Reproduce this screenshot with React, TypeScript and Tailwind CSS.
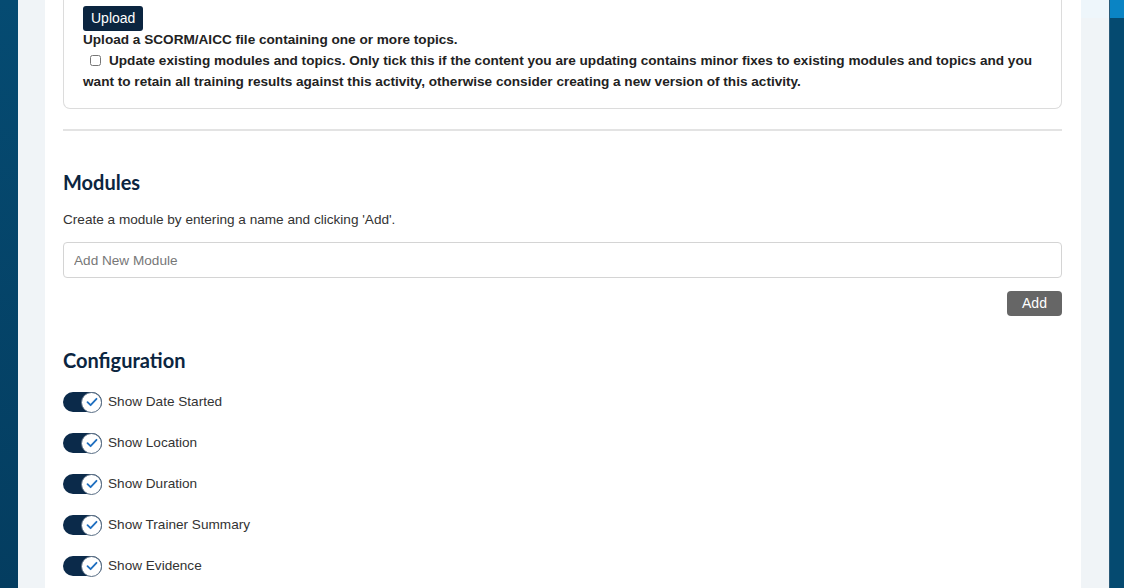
import React from "react";

const Toggle = ({ label }: { label: string }) => (
  <div className="flex items-center h-[20px]">
    <div className="relative w-[39px] h-[20px] rounded-full bg-[#0b2a4a]">
      <div className="absolute right-0 top-0 w-[21px] h-[21px] -mt-[0.5px] rounded-full bg-white border border-[#5a6f86] flex items-center justify-center">
        <svg width="12" height="10" viewBox="0 0 12 10" fill="none">
          <path d="M1.5 5.2 L4.6 8.2 L10.5 1.8" stroke="#1f6fc0" strokeWidth="1.8" strokeLinecap="round" strokeLinejoin="round" />
        </svg>
      </div>
    </div>
    <span className="ml-[6px] text-[13.6px] text-[#333]">{label}</span>
  </div>
);

export default function App() {
  return (
    <div
      className="w-[1124px] h-[588px] overflow-hidden flex"
      style={{ fontFamily: '"Liberation Sans", Arial, sans-serif' }}
    >
      <div className="w-[18px] shrink-0 h-full bg-gradient-to-b from-[#054b72] to-[#043d60]" />
      <div className="w-[27px] shrink-0 h-full bg-[#f0f4f7]" />
      <div className="w-[1036px] shrink-0 h-full bg-white pl-[18px] pr-[19px]">
        <div className="border border-t-0 border-[#dcdcdc] rounded-b-[7px] pl-[19px] pr-[20px] pt-[6px] pb-[16px]">
          <button className="h-[25px] px-[8px] bg-[#0b2540] text-white text-[14px] rounded-[3px]">
            Upload
          </button>
          <div className="text-[13.6px] font-bold text-[#222] leading-[21px] -mt-[2px]">
            Upload a SCORM/AICC file containing one or more topics.
          </div>
          <div className="text-[13.6px] font-bold text-[#222] leading-[21px]">
            <input type="checkbox" className="ml-[7px] mr-[8px] w-[11px] h-[11px] align-[-1px]" />
            Update existing modules and topics. Only tick this if the content you are updating contains minor fixes to existing modules and topics and you want to retain all training results against this activity, otherwise consider creating a new version of this activity.
          </div>
        </div>
        <div className="mt-[20px] h-[2px] bg-[#e3e3e3]" />
        <h2
          className="mt-[39px] text-[20px] leading-[24px] font-bold text-[#0b2540]"
          style={{ fontFamily: 'Lato, "Open Sans", sans-serif' }}
        >
          Modules
        </h2>
        <p className="mt-[16px] text-[13.6px] leading-[20px] text-[#333]">
          Create a module by entering a name and clicking 'Add'.
        </p>
        <input
          className="mt-[12px] w-full h-[36px] border border-[#d4d4d4] rounded-[4px] px-[10px] text-[13.6px] placeholder:text-[#777] outline-none"
          placeholder="Add New Module"
        />
        <div className="flex justify-end mt-[13px]">
          <button className="h-[25px] w-[55px] bg-[#666] text-white text-[14px] rounded-[4px]">Add</button>
        </div>
        <h2
          className="mt-[32px] text-[20px] leading-[24px] font-bold text-[#0b2540]"
          style={{ fontFamily: 'Lato, "Open Sans", sans-serif' }}
        >
          Configuration
        </h2>
        <div className="mt-[20px] flex flex-col gap-[21px]">
          <Toggle label="Show Date Started" />
          <Toggle label="Show Location" />
          <Toggle label="Show Duration" />
          <Toggle label="Show Trainer Summary" />
          <Toggle label="Show Evidence" />
        </div>
      </div>
      <div className="w-[28px] shrink-0 h-full flex flex-col">
        <div className="h-[18px] bg-[#eef6fb]" />
        <div className="flex-1 bg-[#f0f4f7]" />
      </div>
      <div className="flex-1 h-full flex flex-col border-l border-[#2a5a78]">
        <div className="h-[18px] bg-[#0a84c4]" />
        <div className="flex-1 bg-[#054a70]" />
      </div>
    </div>
  );
}
